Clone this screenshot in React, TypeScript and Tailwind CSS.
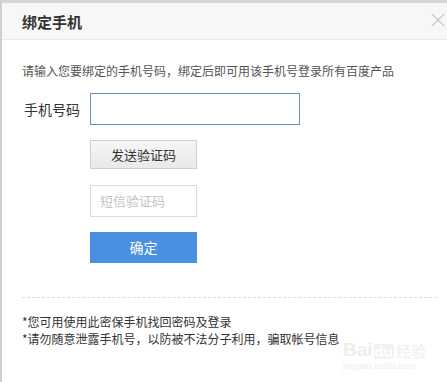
import React from "react";

const font = { fontFamily: '"Noto Sans CJK SC", "Liberation Sans", sans-serif' };

export default function App() {
  return (
    <div
      className="relative w-[447px] h-[382px] overflow-hidden bg-white border-t-[3px] border-t-[#d6d6d6] border-l-2 border-l-[#cfcfcf]"
      style={font}
    >
      <div className="flex h-[37px] items-center justify-between border-b border-[#e8e8e8] bg-[#f7f7f7] pl-[20px] pr-[2px]">
        <span className="text-[15px] font-bold leading-none text-[#333]">绑定手机</span>
        <svg width="14" height="14" viewBox="0 0 14 14" className="mt-[-2px]">
          <path d="M1 1 L13 13 M13 1 L1 13" stroke="#c8c8c8" strokeWidth="1.3" fill="none" />
        </svg>
      </div>
      <div className="flex flex-col pl-[20px] pr-[10px]">
        <p className="mt-[23px] text-[12px] leading-[16px] text-[#555]">
          请输入您要绑定的手机号码，绑定后即可用该手机号登录所有百度产品
        </p>
        <div className="mt-[14px] flex items-center">
          <span className="w-[68px] pl-[2px] text-[14px] leading-none text-[#333]">手机号码</span>
          <div className="h-[32px] w-[210px] border border-[#6a8fbf] bg-white" />
        </div>
        <div className="ml-[68px] mt-[15px] flex h-[29px] w-[107px] items-center justify-center border border-[#cfcfcf] bg-gradient-to-b from-[#f6f6f6] to-[#e9e9e9] text-[13px] text-[#333]">
          发送验证码
        </div>
        <div className="ml-[68px] mt-[16px] flex h-[32px] w-[107px] items-center border border-[#dcdcdc] bg-white pl-[9px] text-[13px] text-[#c4c4c4]">
          短信验证码
        </div>
        <div className="ml-[68px] mt-[15px] flex h-[31px] w-[107px] items-center justify-center bg-[#4a90e2] text-[14px] text-white">
          确定
        </div>
        <div className="mt-[34px] border-t border-dashed border-[#dcdcdc]" />
        <div className="mt-[15px] text-[12px] leading-[17px] text-[#333]">
          <p>*您可用使用此密保手机找回密码及登录</p>
          <p>*请勿随意泄露手机号，以防被不法分子利用，骗取帐号信息</p>
        </div>
      </div>
      <div className="pointer-events-none absolute left-[341px] top-[337px] flex flex-col items-start opacity-60">
        <div className="flex items-end text-[19px] font-bold leading-none text-[#e4e4e4]" style={{ fontFamily: '"Liberation Sans", "Noto Sans CJK SC", sans-serif' }}>
          <span>Bai</span>
          <span className="ml-[1px] rounded-[3px] bg-[#e8e8e8] px-[1px] text-[15px] text-white">du</span>
          <span className="ml-[2px] text-[15px] font-normal">经验</span>
        </div>
        <span className="mt-[3px] text-[9px] leading-none text-[#e4e4e4]" style={{ fontFamily: '"Liberation Sans", sans-serif' }}>
          jingyan.baidu.com
        </span>
      </div>
    </div>
  );
}
